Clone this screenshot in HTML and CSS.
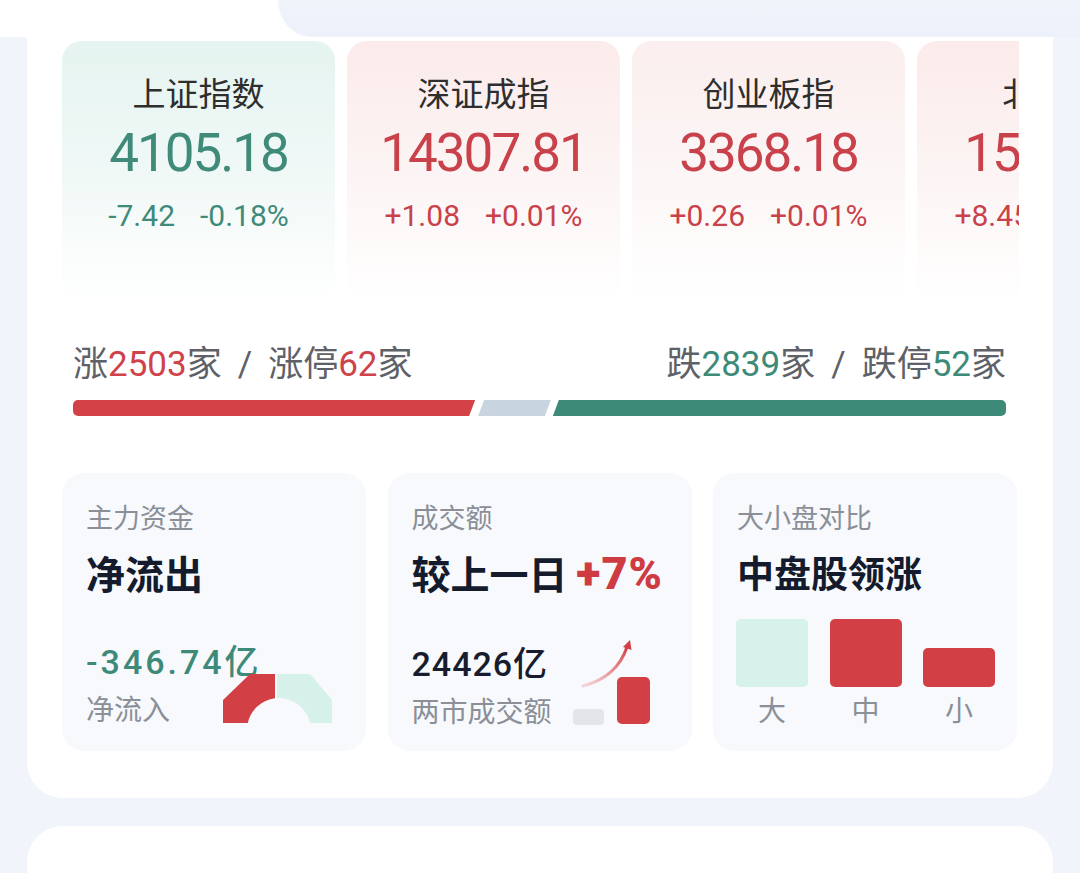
FILE: index.html
```html
<!DOCTYPE html>
<html lang="zh-CN">
<head>
    <meta charset="UTF-8">
    <meta name="viewport" content="width=device-width, initial-scale=1.0">
    <title>市场概览</title>
    <link rel="stylesheet" href="styles.css">
</head>
<body>
<div class="tabs row-box">
    <div class="tab-on"></div>
    <div class="tab-off flex1"></div>
</div>

<div class="panel">
    <!-- 指数 -->
    <div class="idx-row row-box">
        <div class="idx-card down">
            <div class="idx-name">上证指数</div>
            <div class="idx-val">4105.18</div>
            <div class="idx-chg"><span>-7.42</span><span>-0.18%</span></div>
        </div>
        <div class="idx-card up">
            <div class="idx-name">深证成指</div>
            <div class="idx-val">14307.81</div>
            <div class="idx-chg"><span>+1.08</span><span>+0.01%</span></div>
        </div>
        <div class="idx-card up light">
            <div class="idx-name">创业板指</div>
            <div class="idx-val">3368.18</div>
            <div class="idx-chg"><span>+0.26</span><span>+0.01%</span></div>
        </div>
        <div class="idx-card up">
            <div class="idx-name">北证50</div>
            <div class="idx-val">1562.03</div>
            <div class="idx-chg"><span>+8.45</span><span>+0.54%</span></div>
        </div>
    </div>

    <!-- 涨跌分布 -->
    <div class="breadth">
        <div class="breadth-txt row-box">
            <div>涨<em class="c-up">2503</em>家<i>/</i>涨停<em class="c-up">62</em>家</div>
            <div>跌<em class="c-down">2839</em>家<i>/</i>跌停<em class="c-down">52</em>家</div>
        </div>
        <div class="breadth-bar row-box">
            <div class="seg seg-up" style="width:43.1%"></div>
            <div class="seg seg-flat" style="width:7.8%"></div>
            <div class="seg seg-down flex1"></div>
        </div>
    </div>

    <!-- 资金 / 成交 / 大小盘 -->
    <div class="stat-row row-box">
        <div class="stat-card">
            <div class="stat-label">主力资金</div>
            <div class="stat-title">净流出</div>
            <div class="stat-foot">
                <div class="stat-num c-down">-346.74亿</div>
                <div class="stat-sub">净流入</div>
            </div>
            <svg class="gauge" width="110" height="50" viewBox="0 0 110 50">
                <path d="M0 50 L0 27 L27 1 L52 1 L52 25.3 A32 32 0 0 0 24.8 50 Z" fill="#d23f44"/>
                <path d="M54 1 L87 1 L109 27 L109 50 L87.2 50 A32 32 0 0 0 54 25.1 Z" fill="#d6f0ea"/>
            </svg>
        </div>

        <div class="stat-card">
            <div class="stat-label">成交额</div>
            <div class="stat-title">较上一日 <b>+7%</b></div>
            <div class="stat-foot2 row-box">
                <div>
                    <div class="stat-num dark">24426亿</div>
                    <div class="stat-sub">两市成交额</div>
                </div>
                <svg class="vol-chart" width="80" height="86" viewBox="0 0 80 86">
                    <defs>
                        <linearGradient id="arrowGrad" x1="0" y1="1" x2="1" y2="0">
                            <stop offset="0" stop-color="#e8868a" stop-opacity="0.3"/>
                            <stop offset="1" stop-color="#d23f44"/>
                        </linearGradient>
                    </defs>
                    <rect x="1" y="70" width="31" height="16" rx="4" fill="#e3e5e8"/>
                    <rect x="45" y="38" width="33" height="47" rx="5" fill="#d23f44"/>
                    <path d="M11 47 Q45 38 55 8" fill="none" stroke="url(#arrowGrad)" stroke-width="3" stroke-linecap="round"/>
                    <path d="M58 1 L59.5 11 L51 8 Z" fill="#d23f44"/>
                </svg>
            </div>
        </div>

        <div class="stat-card">
            <div class="stat-label">大小盘对比</div>
            <div class="stat-title small">中盘股领涨</div>
            <div class="cap-bars row-box">
                <div class="cap-col">
                    <div class="cap-bar mint" style="height:68px"></div>
                    <div class="cap-name">大</div>
                </div>
                <div class="cap-col">
                    <div class="cap-bar red" style="height:68px"></div>
                    <div class="cap-name">中</div>
                </div>
                <div class="cap-col">
                    <div class="cap-bar red" style="height:39px"></div>
                    <div class="cap-name">小</div>
                </div>
            </div>
        </div>
    </div>
</div>

<div class="panel next"></div>
</body>
</html>
```

FILE: styles.css
```css
*{box-sizing: border-box;margin: 0;padding: 0;}
body{width: 1080px;height: 873px;overflow: hidden;background: #f1f4fb;font-family: "Roboto","Noto Sans CJK SC",sans-serif;color: #333;}

.row-box{display: -webkit-flex;display: flex;flex-direction: row;flex-wrap: nowrap;}
.flex1{flex: 1 1 auto;}
.c-up{color: #cf424a;}
.c-down{color: #3e8a78;}

/* 顶部标签 */
.tabs{height: 37px;background: #fff;}
.tab-on{width: 278px;}
.tab-off{background: linear-gradient(180deg,#f0f3fa,#edf1f9);border-bottom-left-radius: 34px 37px;}

/* 白色面板 */
.panel{margin: 0 27px;background: #fff;padding: 4px 36px 47px 35px;border-radius: 0 0 36px 36px;}
.panel.next{margin-top: 28px;height: 80px;padding: 0;border-radius: 36px 36px 0 0;}

/* 指数卡片 */
.idx-row{overflow: hidden;margin-right: -2px;}
.idx-card{flex: 0 0 273px;height: 262px;margin-right: 12px;border-radius: 20px;text-align: center;padding-top: 31px;white-space: nowrap;}
.idx-card.down{background: linear-gradient(180deg,#e5f4f0 0%,#eff8f6 45%,#fff 100%);}
.idx-card.up{background: linear-gradient(180deg,#fcebeb 0%,#fcf3f3 45%,#fff 100%);}
.idx-card.light{background: linear-gradient(180deg,#fbeeee 0%,#fcf5f5 45%,#fff 100%);}
.idx-name{font-family: "Noto Sans CJK SC",sans-serif;font-size: 33px;line-height: 40px;color: #2e2e2e;}
.idx-val{font-size: 53px;line-height: 60px;margin-top: 11px;letter-spacing: -2px;}
.idx-chg{font-size: 30px;line-height: 36px;margin-top: 15px;}
.idx-chg span+span{margin-left: 25px;}
.down .idx-val,.down .idx-chg{color: #3f8a78;}
.up .idx-val,.up .idx-chg{color: #c9414a;}

/* 涨跌分布 */
.breadth{padding: 0 11px;margin-top: 42px;}
.breadth-txt{justify-content: space-between;font-size: 35px;line-height: 40px;color: #5e6167;}
.breadth-txt em{font-style: normal;}
.breadth-txt i{font-style: normal;margin: 0 16px;}
.breadth-bar{height: 16px;margin-top: 15px;}
.seg{height: 16px;}
.seg-up{background: #d34246;border-radius: 5px 0 0 5px;clip-path: polygon(0 0,100% 0,calc(100% - 6px) 100%,0 100%);}
.seg-flat{margin-left: 3px;background: #c9d4e1;clip-path: polygon(6px 0,100% 0,calc(100% - 6px) 100%,0 100%);}
.seg-down{margin-left: 2px;background: #3e8a78;border-radius: 0 5px 5px 0;clip-path: polygon(6px 0,100% 0,100% 100%,0 100%);}

/* 底部三卡 */
.stat-row{margin-top: 57px;justify-content: space-between;}
.stat-card{position: relative;width: 304px;height: 278px;background: #f7f9fd;border-radius: 22px;padding: 26px 24px 0;font-family: "Noto Sans CJK SC",sans-serif;}
.stat-label{font-size: 27px;line-height: 36px;color: #8a8f98;}
.stat-title{font-size: 39px;line-height: 50px;margin-top: 12px;font-weight: 700;color: #141b2c;white-space: nowrap;}
.stat-title.small{font-size: 37px;}
.stat-title b{font-family: "Roboto",sans-serif;font-size: 45px;letter-spacing: 1px;color: #cf3b42;}
.stat-foot{margin-top: 45px;}
.stat-num{font-family: "Roboto","Noto Sans CJK SC",sans-serif;font-size: 34px;line-height: 40px;font-weight: 500;letter-spacing: 3px;}
.stat-num.dark{color: #171d2c;letter-spacing: 1px;}
.stat-sub{font-size: 28px;line-height: 36px;margin-top: 8px;color: #8a8f98;}
.gauge{position: absolute;right: 33px;bottom: 28px;}
.stat-foot2{margin-top: 40px;justify-content: space-between;align-items: flex-end;}
.vol-chart{margin: 0 16px 3px 0;}

.cap-bars{margin: 22px -2px 0 -1px;justify-content: space-between;align-items: flex-end;}
.cap-col{width: 72px;text-align: center;}
.cap-bar{border-radius: 5px;}
.cap-bar.mint{background: #d7f1eb;}
.cap-bar.red{background: #d23f44;}
.cap-name{font-size: 28px;line-height: 36px;margin-top: 4px;color: #8a8f98;}
```
